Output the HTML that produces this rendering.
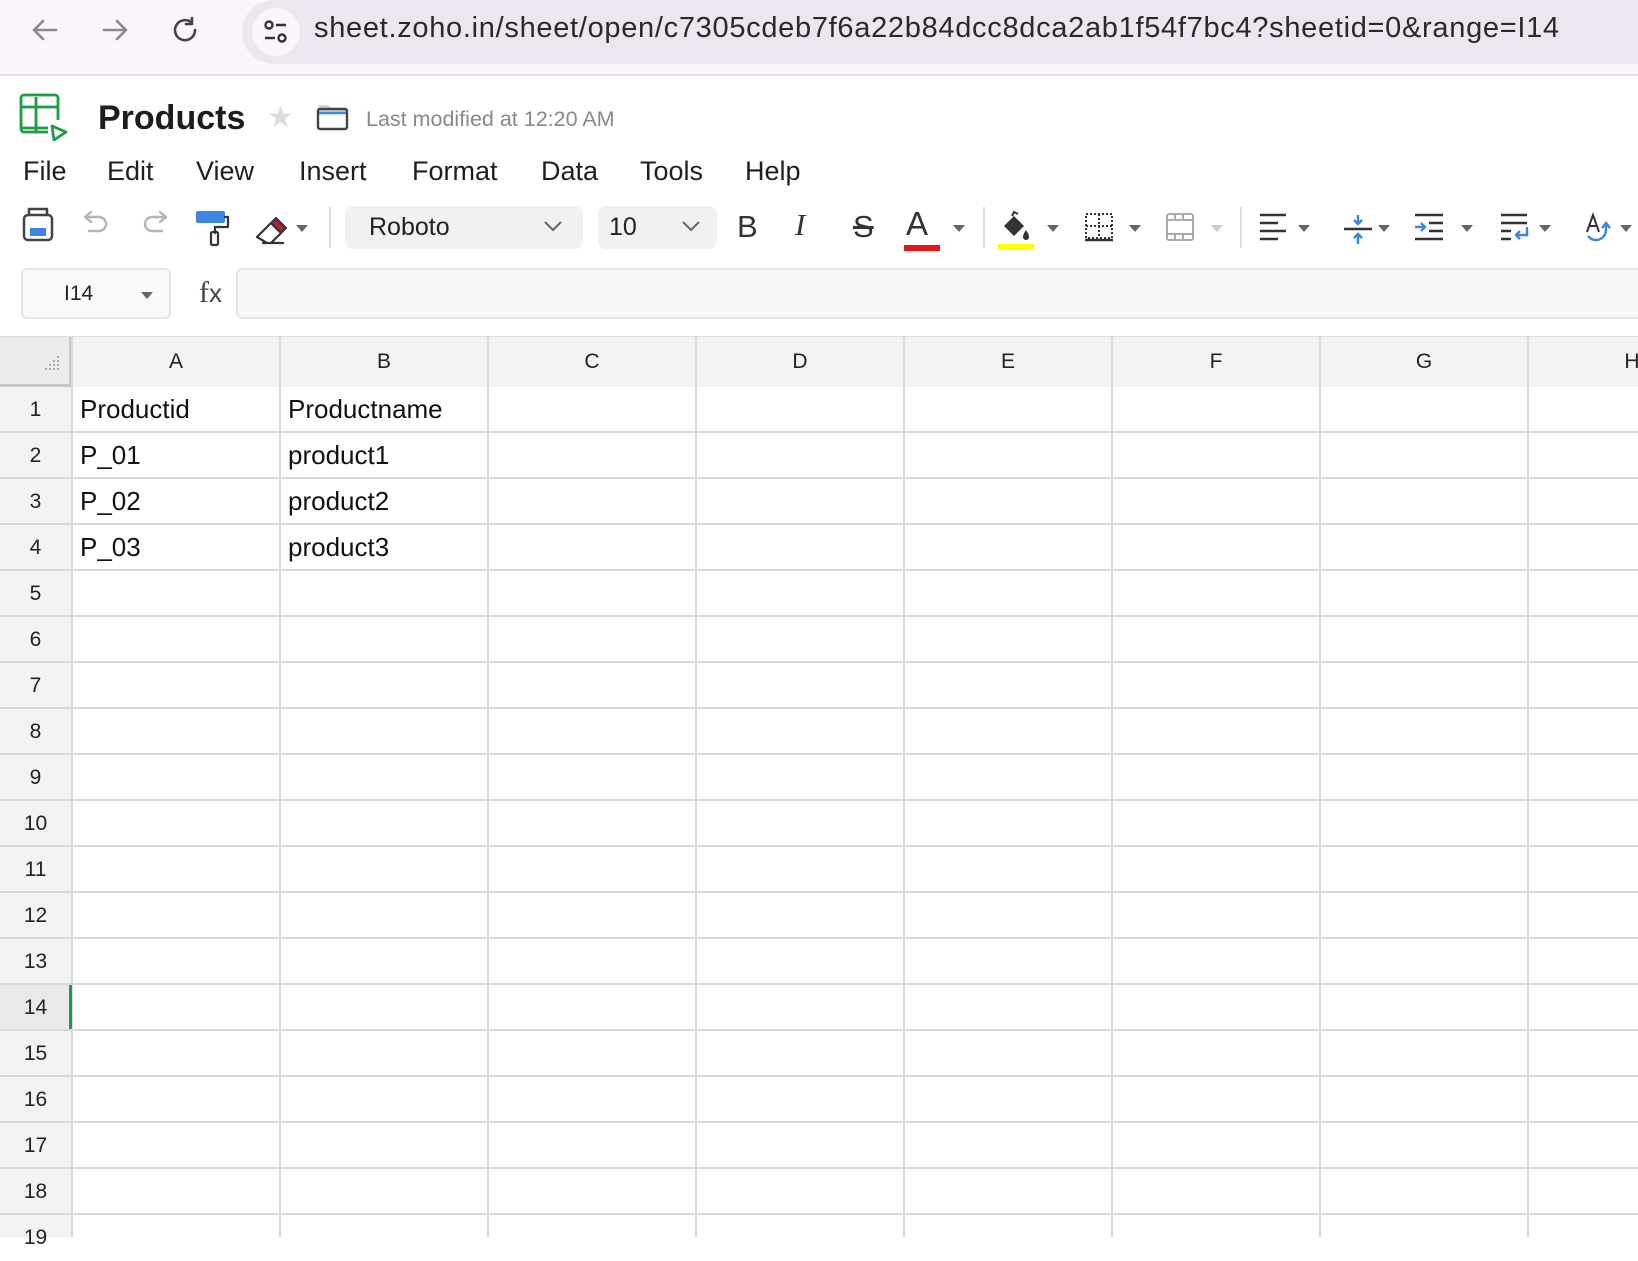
<!DOCTYPE html>
<html><head><meta charset="utf-8"><style>
*{margin:0;padding:0;box-sizing:border-box}
body{width:1638px;height:1232px;overflow:hidden;background:#fff;font-family:"Liberation Sans",sans-serif;position:relative;color:#222}
.a{position:absolute}
.menu span{position:absolute;top:156px;font-size:27px;color:#1f1f1f}
.dd{position:absolute;width:0;height:0;border-left:6px solid transparent;border-right:6px solid transparent;border-top:7px solid #666}
.sep{position:absolute;top:207px;width:2px;height:41px;background:#ddd}
.rn{position:absolute;left:0;width:71px;height:46px;line-height:46px;text-align:center;font-size:21px;color:#222}
.ch{position:absolute;top:337px;height:50px;line-height:50px;text-align:center;font-size:21px;width:208px;color:#222}
.c{position:absolute;font-size:26px;color:#111;height:46px;line-height:46px}
</style></head><body>
<!-- browser bar -->
<div class="a" style="left:0;top:0;width:1638px;height:76px;background:#fbf6fc;border-bottom:2px solid #e4e0e6"></div>
<svg class="a" style="left:28px;top:14px" width="200" height="32" viewBox="0 0 200 32" fill="none" stroke="#8a8790" stroke-width="2.6" stroke-linecap="round" stroke-linejoin="round">
<path d="M28 16H6M15 7l-9 9 9 9"/>
<path d="M76 16h22M89 7l9 9-9 9"/>
<path stroke="#444" d="M164 9a10 10 0 1 0 3 7M164 4v6h-6"/>
</svg>
<div class="a" style="left:242px;top:0;width:1396px;height:64px;background:#ebe6ef;border-radius:32px 0 0 32px"></div>
<div class="a" style="left:252px;top:8px;width:48px;height:48px;border-radius:24px;background:#fbf6fc"></div>
<svg class="a" style="left:262px;top:18px" width="28" height="28" viewBox="0 0 28 28" fill="none" stroke="#333" stroke-width="2.4"><circle cx="7" cy="7" r="3.5"/><path d="M14 7h10M3 20h10"/><circle cx="20" cy="20" r="3.5"/></svg>
<div class="a" style="left:314px;top:12px;font-size:29px;color:#2a2a2a;letter-spacing:0.7px">sheet.zoho.in/sheet/open/c7305cdeb7f6a22b84dcc8dca2ab1f54f7bc4?sheetid=0&amp;range=I14</div>
<!-- title -->
<svg class="a" style="left:18px;top:93px" width="52" height="48" viewBox="0 0 52 48" fill="none" stroke="#1f9a45" stroke-width="2.8"><path d="M30 39H6a3 3 0 0 1-3-3V5a3 3 0 0 1 3-3h31a3 3 0 0 1 3 3v22"/><path d="M3 14h37M18 4v35M4 35h26"/><path d="M34 33l2 14 12-8z" stroke-linejoin="round"/></svg>
<div class="a" style="left:98px;top:99px;font-size:34px;font-weight:bold;color:#1d1d1d">Products</div>
<div class="a" style="left:267px;top:100px;font-size:30px;color:#dcdcdc">★</div>
<svg class="a" style="left:316px;top:103px" width="34" height="28" viewBox="0 0 34 28" fill="none"><path d="M2 4a2 2 0 0 1 2-2h8l3 3h14a2 2 0 0 1 2 2v4H2z" fill="#d8d8d8"/><rect x="2" y="6" width="29" height="20" rx="2" stroke="#444" stroke-width="2.4"/><path d="M3 10h27" stroke="#3a86e0" stroke-width="2.6"/></svg>
<div class="a" style="left:366px;top:107px;font-size:21.5px;color:#888">Last modified at 12:20 AM</div>
<div class="menu"><span style="left:23px">File</span><span style="left:107px">Edit</span><span style="left:196px">View</span><span style="left:299px">Insert</span><span style="left:412px">Format</span><span style="left:541px">Data</span><span style="left:640px">Tools</span><span style="left:745px">Help</span></div>
<!-- toolbar -->
<svg class="a" style="left:0;top:200px" width="340" height="56" viewBox="0 0 340 56" fill="none" stroke-linecap="round" stroke-linejoin="round">
<rect x="24" y="15" width="28" height="25" rx="4" stroke="#444" stroke-width="2.5"/><path d="M29 15v-6h18v6" stroke="#444" stroke-width="2.5"/><rect x="30" y="28" width="16" height="8" fill="#3a86e0"/>
<path d="M85 17h14a7 7 0 0 1 0 14h-10M85 17l6-5M85 17l6 5" stroke="#b5b5b5" stroke-width="2.4"/>
<path d="M166 17h-14a7 7 0 0 0 0 14h10M166 17l-6-5M166 17l-6 5" stroke="#b5b5b5" stroke-width="2.4"/>
<rect x="196" y="11" width="29" height="12" rx="2" fill="#3a86e0"/><path d="M225 17h3v10h-13v6" stroke="#333" stroke-width="2.2"/><rect x="211" y="32" width="7" height="13" rx="1.5" stroke="#333" stroke-width="2.2"/>
<path d="M257 37l14-14 10 10-10 10h-4zM263 43h20" stroke="#333" stroke-width="2.2"/><path d="M271 23l5-5 10 10-5 5z" fill="#a23" stroke="#333" stroke-width="2"/>
</svg>
<div class="dd" style="left:296px;top:225px"></div>
<div class="sep" style="left:329px"></div>
<div class="a" style="left:345px;top:206px;width:238px;height:43px;background:#f1f1f1;border-radius:8px"></div>
<div class="a" style="left:369px;top:213px;font-size:25px;color:#222">Roboto</div>
<svg class="a" style="left:543px;top:219px" width="20" height="14"><path d="M2 3l8 8 8-8" stroke="#666" stroke-width="2" fill="none"/></svg>
<div class="a" style="left:598px;top:206px;width:119px;height:43px;background:#f1f1f1;border-radius:8px"></div>
<div class="a" style="left:609px;top:213px;font-size:25px;color:#222">10</div>
<svg class="a" style="left:681px;top:219px" width="20" height="14"><path d="M2 3l8 8 8-8" stroke="#666" stroke-width="2" fill="none"/></svg>
<div class="a" style="left:737px;top:209px;font-size:31px;color:#333">B</div>
<div class="a" style="left:795px;top:207px;font-size:31px;color:#333;font-family:'Liberation Serif',serif;font-style:italic">I</div>
<div class="a" style="left:853px;top:209px;font-size:31px;color:#333;text-decoration:line-through">S</div>
<div class="a" style="left:906px;top:205px;font-size:33px;color:#333">A</div>
<div class="a" style="left:904px;top:245px;width:36px;height:6px;background:#e0161a"></div>
<div class="dd" style="left:953px;top:225px"></div>
<div class="sep" style="left:983px"></div>
<svg class="a" style="left:998px;top:210px" width="36" height="36" viewBox="0 0 36 36"><path d="M6 16l10-10 10 10-10 10z" fill="#333"/><path d="M14 6l2-4 4 2" stroke="#333" stroke-width="2" fill="none"/><path d="M28 20c2 3 3 5 3 7a3 3 0 0 1-6 0c0-2 1-4 3-7z" fill="#333"/></svg>
<div class="a" style="left:998px;top:244px;width:36px;height:6px;background:#ffff00"></div>
<div class="dd" style="left:1047px;top:225px"></div>
<svg class="a" style="left:1084px;top:212px" width="30" height="30" viewBox="0 0 30 30" fill="none" stroke="#333" stroke-width="2" stroke-dasharray="2 2"><rect x="2" y="2" width="26" height="24"/><path d="M15 2v24M2 14h26"/><path d="M1 28h28" stroke-dasharray="none" stroke-width="2.5"/></svg>
<div class="dd" style="left:1129px;top:225px"></div>
<svg class="a" style="left:1165px;top:212px" width="30" height="30" viewBox="0 0 30 30" fill="none" stroke="#aaa" stroke-width="2"><rect x="2" y="2" width="26" height="26" rx="2"/><path d="M2 8h26M2 22h26M10 2v6M18 2v6M10 22v6M18 22v6"/></svg>
<div class="dd" style="left:1211px;top:225px;border-top-color:#ccc"></div>
<div class="sep" style="left:1240px"></div>
<svg class="a" style="left:1258px;top:212px" width="400" height="34" viewBox="0 0 400 34" fill="none" stroke="#333" stroke-width="2.4">
<path d="M2 3h26M2 11h18M2 19h26M2 27h18"/>
<path d="M86 17h28"/><path d="M100 3v9M100 22v10" stroke="#3a86e0"/><path d="M96 8l4 4 4-4M96 26l4-4 4 4" stroke="#3a86e0"/>
<path d="M157 3h28M171 11h14M171 19h14M157 27h28"/><path d="M157 15h10M163 11l4 4-4 4" stroke="#3a86e0"/>
<path d="M243 3h26M243 11h26M243 19h10M243 27h10"/><path d="M269 15v8h-10M262 19l-4 4 4 4" stroke="#3a86e0"/>
<path d="M329 20l6-17 6 17M331 14h8" stroke-width="2"/><path d="M330 24a10 10 0 0 0 18-6v-6M344 16l4-5 4 5" stroke="#3a86e0"/>
</svg>
<div class="dd" style="left:1298px;top:225px"></div>
<div class="dd" style="left:1378px;top:225px"></div>
<div class="dd" style="left:1461px;top:225px"></div>
<div class="dd" style="left:1539px;top:225px"></div>
<div class="dd" style="left:1620px;top:225px"></div>
<!-- formula bar -->
<div class="a" style="left:21px;top:268px;width:150px;height:51px;border:2px solid #e6e6e6;border-radius:6px;background:#fafafa"></div>
<div class="a" style="left:64px;top:282px;font-size:21px;color:#222">I14</div>
<div class="dd" style="left:141px;top:292px"></div>
<div class="a" style="left:199px;top:276px;font-size:30px;color:#444;font-family:'Liberation Serif',serif">f<span style="font-family:'Liberation Sans';font-size:26px">x</span></div>
<div class="a" style="left:236px;top:268px;width:1410px;height:51px;border:2px solid #e6e6e6;border-radius:6px 0 0 6px;background:#f8f8f8"></div>
<!-- grid -->
<div class="a" style="left:0;top:336px;width:1638px;height:1px;background:#ddd"></div>
<div class="a" style="left:0;top:337px;width:1638px;height:50px;background:#f3f3f3"></div>
<div class="a" style="left:0;top:337px;width:72px;height:900px;background:#f3f3f3"></div>
<div class="a" style="left:0;top:337px;width:72px;height:50px;background:#ececec;border-right:3px solid #c8c8c8;border-bottom:3px solid #c8c8c8"></div>
<svg class="a" style="left:40px;top:355px" width="22" height="20"><g fill="#999"><circle cx="18" cy="2" r="1"/><circle cx="14" cy="6" r="1"/><circle cx="18" cy="6" r="1"/><circle cx="10" cy="10" r="1"/><circle cx="14" cy="10" r="1"/><circle cx="18" cy="10" r="1"/><circle cx="6" cy="14" r="1"/><circle cx="10" cy="14" r="1"/><circle cx="14" cy="14" r="1"/><circle cx="18" cy="14" r="1"/></g></svg>
<div class="a" style="left:0;top:387px;width:1638px;height:850px;background-image:repeating-linear-gradient(to bottom,transparent 0,transparent 44px,#d9d9d9 44px,#d9d9d9 46px)"></div>
<div class="a" style="left:71px;top:337px;width:1567px;height:900px;background-image:repeating-linear-gradient(to right,#d9d9d9 0,#d9d9d9 2px,transparent 2px,transparent 208px)"></div>
<div class="a" style="left:0;top:985px;width:71px;height:44px;background:#e9e9e9"></div>
<div class="a" style="left:69px;top:985px;width:3px;height:44px;background:#1f9a45"></div>
<div class="ch" style="left:72px">A</div><div class="ch" style="left:280px">B</div><div class="ch" style="left:488px">C</div><div class="ch" style="left:696px">D</div><div class="ch" style="left:904px">E</div><div class="ch" style="left:1112px">F</div><div class="ch" style="left:1320px">G</div><div class="ch" style="left:1528px">H</div>
<div class="rn" style="top:387px">1</div><div class="rn" style="top:433px">2</div><div class="rn" style="top:479px">3</div><div class="rn" style="top:525px">4</div><div class="rn" style="top:571px">5</div><div class="rn" style="top:617px">6</div><div class="rn" style="top:663px">7</div><div class="rn" style="top:709px">8</div><div class="rn" style="top:755px">9</div><div class="rn" style="top:801px">10</div><div class="rn" style="top:847px">11</div><div class="rn" style="top:893px">12</div><div class="rn" style="top:939px">13</div><div class="rn" style="top:985px">14</div><div class="rn" style="top:1031px">15</div><div class="rn" style="top:1077px">16</div><div class="rn" style="top:1123px">17</div><div class="rn" style="top:1169px">18</div><div class="rn" style="top:1215px">19</div>
<div class="c" style="left:80px;top:386px">Productid</div><div class="c" style="left:288px;top:386px">Productname</div>
<div class="c" style="left:80px;top:432px">P_01</div><div class="c" style="left:288px;top:432px">product1</div>
<div class="c" style="left:80px;top:478px">P_02</div><div class="c" style="left:288px;top:478px">product2</div>
<div class="c" style="left:80px;top:524px">P_03</div><div class="c" style="left:288px;top:524px">product3</div>
</body></html>
